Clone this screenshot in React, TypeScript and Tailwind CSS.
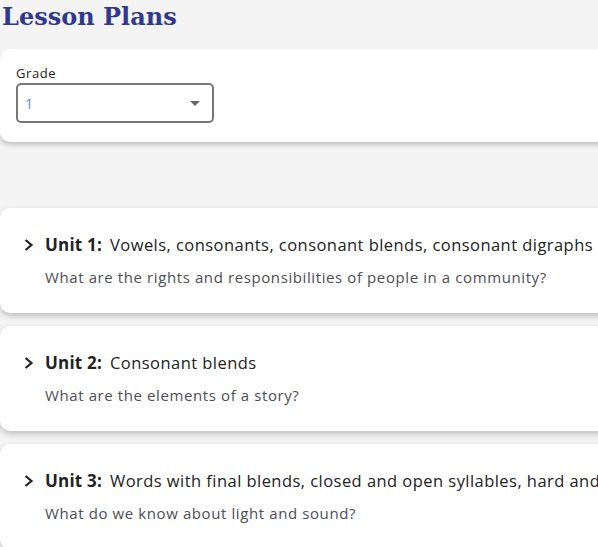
import { FC } from 'react'

// ** Data
const units = [
  { n: 1, title: 'Vowels, consonants, consonant blends, consonant digraphs', q: 'What are the rights and responsibilities of people in a community?' },
  { n: 2, title: 'Consonant blends', q: 'What are the elements of a story?' },
  { n: 3, title: 'Words with final blends, closed and open syllables, hard and soft c and g', q: 'What do we know about light and sound?' },
]

interface IUnitCard {
  n: number;
  title: string;
  q: string;
}

const UnitCard: FC<IUnitCard> = ({ n, title, q }) => {
  return (
    <div className="bg-white rounded-l-[10px] shadow-[0_3px_6px_rgba(0,0,0,0.22)] pl-6 pt-[26px] pb-[25px] h-[105px] shrink-0">
      <div className="flex items-center h-[22px] whitespace-nowrap">
        <svg width="10" height="12" viewBox="0 0 10 12" className="mr-[11px]">
          <path d="M1.5 1 L7.5 6 L1.5 11" fill="none" stroke="#222" strokeWidth="2.2" />
        </svg>
        <span className="text-[17px] font-bold text-[#222] tracking-[0.2px]">Unit {n}:</span>
        <span className="ml-2 text-[16.5px] text-[#222] tracking-[0.45px]">{title}</span>
      </div>
      <p className="ml-[21px] mt-[10px] text-[15px] text-[#4d4d57] whitespace-nowrap tracking-[0.6px]">{q}</p>
    </div>
  )
}

const App = () => {
  return (
    <div className="w-[598px] h-[547px] overflow-hidden bg-[#f4f4f4] font-['Open_Sans',sans-serif]">
      {/* heading */}
      <h1 className="pl-[2px] h-[49px] pt-[1px] text-[24px] leading-[32px] font-bold text-[#2f3a8f] font-['DejaVu_Serif',serif]">
        Lesson Plans
      </h1>

      {/* grade filter */}
      <div className="w-[640px] h-[93px] bg-white rounded-l-[10px] shadow-[0_3px_5px_rgba(0,0,0,0.2)] pl-4 pt-[15px]">
        <label className="block text-[13px] leading-[18px] text-[#222] tracking-[0.6px]">Grade</label>
        <div className="mt-px w-[198px] h-[40px] border-2 border-[#777] rounded-[5px] flex items-center justify-between pl-[7px] pr-[12px]">
          <span className="text-[14px] text-[#4a90d9]">1</span>
          <svg width="10" height="5" viewBox="0 0 10 5">
            <path d="M0 0 L10 0 L5 5 Z" fill="#666" />
          </svg>
        </div>
      </div>

      {/* units */}
      <div className="mt-[66px] w-[760px] flex flex-col gap-[13px]">
        {units.map((u) => (
          <UnitCard key={u.n} n={u.n} title={u.title} q={u.q} />
        ))}
      </div>
    </div>
  )
}

export default App
